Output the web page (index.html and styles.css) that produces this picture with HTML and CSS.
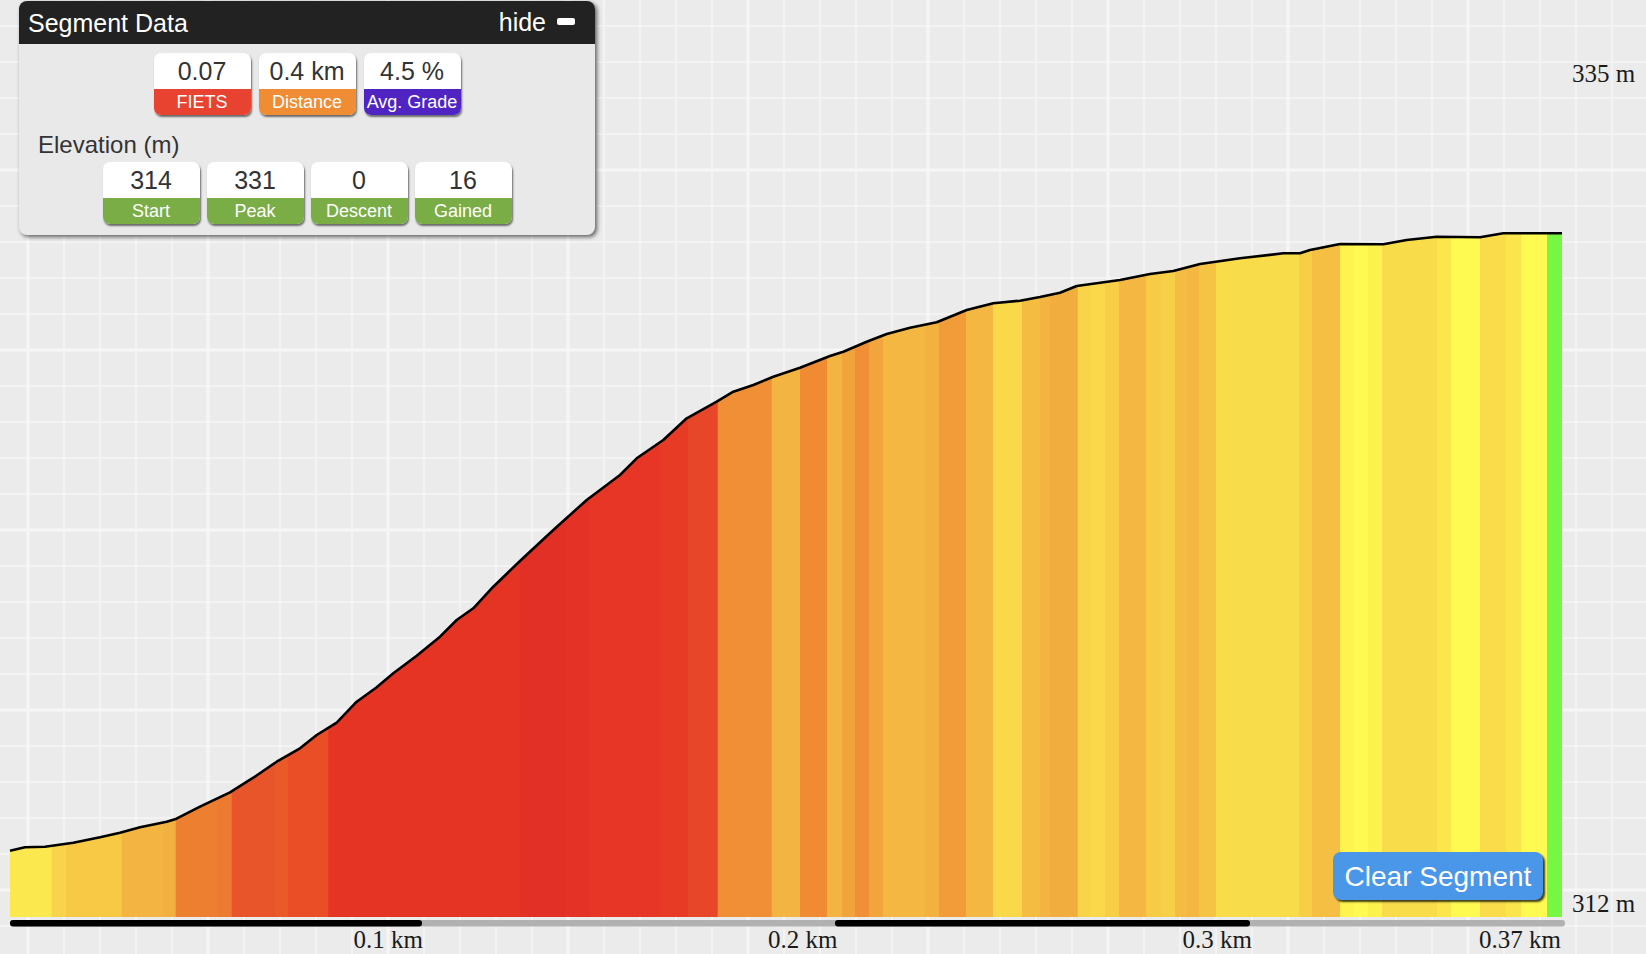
FILE: index.html
```html
<!DOCTYPE html>
<html lang="en">
<head>
<meta charset="utf-8">
<title>Segment Data</title>
<link rel="stylesheet" href="styles.css">
</head>
<body>
<div class="stage">
  <svg class="chart" width="1646" height="954" viewBox="0 0 1646 954" xmlns="http://www.w3.org/2000/svg">
    <defs>
      <clipPath id="area">
        <path d="M10,917 L10,850.7 L25,847.3 L45,846.7 L73.3,842.7 L100,837.3 L120,832.7 L140,827.3 L166.7,821.7 L175,819.3 L200,806.7 L230,792.3 L253.3,777.7 L276.7,761.7 L300,748.3 L316.7,735 L336.7,722.7 L356.7,701.7 L376.7,687.3 L393.3,673.3 L416.7,655.7 L440,636.7 L456.7,620 L473.3,608.3 L493.3,586.7 L520,561 L553.3,530 L586.7,500 L620,475 L636.7,458.3 L663.3,440 L686.7,418.3 L716.7,401.7 L733.3,391.7 L753.3,385 L773.3,376.7 L800,367.7 L830,356 L843.3,351.7 L866.7,341.7 L886.7,334 L910,327.7 L936.7,322.3 L966.7,310 L993.3,303.3 L1020,300.7 L1040,297 L1060,292.7 L1076.7,286 L1120,280 L1150,274 L1173.3,271 L1200,264 L1240,258.3 L1283.3,253.3 L1300,253.3 L1310,250 L1340,244 L1383.3,244.3 L1406.7,240 L1436.7,236.7 L1480,237.3 L1503.3,233.3 L1562,233.3 L1562,917 Z"/>
      </clipPath>
    </defs>
    <g clip-path="url(#area)">
      <rect x="10" y="200" width="42.7" height="720" fill="#fbe84e"/>
      <rect x="51.7" y="200" width="15.3" height="720" fill="#f9d44a"/>
      <rect x="66" y="200" width="56.7" height="720" fill="#f7c944"/>
      <rect x="121.7" y="200" width="42.6" height="720" fill="#f3b441"/>
      <rect x="163.3" y="200" width="13.4" height="720" fill="#f2b040"/>
      <rect x="175.7" y="200" width="42.6" height="720" fill="#ec7f30"/>
      <rect x="217.3" y="200" width="15.4" height="720" fill="#ed7a31"/>
      <rect x="231.7" y="200" width="44.3" height="720" fill="#e8552a"/>
      <rect x="275" y="200" width="14" height="720" fill="#e95a28"/>
      <rect x="288" y="200" width="41.3" height="720" fill="#e94e26"/>
      <rect x="328.3" y="200" width="192.7" height="720" fill="#e63424"/>
      <rect x="520" y="200" width="46" height="720" fill="#e33026"/>
      <rect x="565" y="200" width="26" height="720" fill="#e43326"/>
      <rect x="590" y="200" width="71" height="720" fill="#e73626"/>
      <rect x="660" y="200" width="29" height="720" fill="#e83b26"/>
      <rect x="688" y="200" width="30.7" height="720" fill="#e84629"/>
      <rect x="717.7" y="200" width="55" height="720" fill="#f08f35"/>
      <rect x="771.7" y="200" width="29.3" height="720" fill="#f3b442"/>
      <rect x="800" y="200" width="28" height="720" fill="#f08b34"/>
      <rect x="827" y="200" width="16" height="720" fill="#f3b442"/>
      <rect x="842" y="200" width="14" height="720" fill="#f1a33c"/>
      <rect x="855" y="200" width="15" height="720" fill="#f08f35"/>
      <rect x="869" y="200" width="15" height="720" fill="#f1a53c"/>
      <rect x="883" y="200" width="43" height="720" fill="#f4b742"/>
      <rect x="925" y="200" width="15" height="720" fill="#f3b23f"/>
      <rect x="939" y="200" width="28" height="720" fill="#f19c38"/>
      <rect x="966" y="200" width="28" height="720" fill="#f4b742"/>
      <rect x="993" y="200" width="30" height="720" fill="#f9d94a"/>
      <rect x="1022" y="200" width="19" height="720" fill="#f5bc42"/>
      <rect x="1040" y="200" width="11" height="720" fill="#f3b442"/>
      <rect x="1050" y="200" width="28.7" height="720" fill="#f2ad3f"/>
      <rect x="1077.7" y="200" width="13.3" height="720" fill="#f9d44a"/>
      <rect x="1090" y="200" width="16" height="720" fill="#fad84a"/>
      <rect x="1105" y="200" width="15" height="720" fill="#f8ce46"/>
      <rect x="1119" y="200" width="28" height="720" fill="#f4b842"/>
      <rect x="1146" y="200" width="16" height="720" fill="#f8cb46"/>
      <rect x="1161" y="200" width="15" height="720" fill="#f8d048"/>
      <rect x="1175" y="200" width="13" height="720" fill="#f4bc42"/>
      <rect x="1187" y="200" width="13" height="720" fill="#f3b742"/>
      <rect x="1199" y="200" width="18" height="720" fill="#f6c444"/>
      <rect x="1216" y="200" width="84" height="720" fill="#f9dc4a"/>
      <rect x="1299" y="200" width="14" height="720" fill="#f7cf47"/>
      <rect x="1312" y="200" width="29" height="720" fill="#f4bf43"/>
      <rect x="1340" y="200" width="15" height="720" fill="#fef34f"/>
      <rect x="1354" y="200" width="15" height="720" fill="#fefa51"/>
      <rect x="1368" y="200" width="15" height="720" fill="#fdf14e"/>
      <rect x="1382" y="200" width="56" height="720" fill="#f9dc4a"/>
      <rect x="1437" y="200" width="15" height="720" fill="#fbe74c"/>
      <rect x="1451" y="200" width="30" height="720" fill="#fefa51"/>
      <rect x="1480" y="200" width="27" height="720" fill="#fadc4b"/>
      <rect x="1506" y="200" width="16" height="720" fill="#fbe54d"/>
      <rect x="1521" y="200" width="27" height="720" fill="#fefa51"/>
      <rect x="1547" y="200" width="15" height="720" fill="#76f744"/>
    </g>
    <path class="profile" d="M10,850.7 L25,847.3 L45,846.7 L73.3,842.7 L100,837.3 L120,832.7 L140,827.3 L166.7,821.7 L175,819.3 L200,806.7 L230,792.3 L253.3,777.7 L276.7,761.7 L300,748.3 L316.7,735 L336.7,722.7 L356.7,701.7 L376.7,687.3 L393.3,673.3 L416.7,655.7 L440,636.7 L456.7,620 L473.3,608.3 L493.3,586.7 L520,561 L553.3,530 L586.7,500 L620,475 L636.7,458.3 L663.3,440 L686.7,418.3 L716.7,401.7 L733.3,391.7 L753.3,385 L773.3,376.7 L800,367.7 L830,356 L843.3,351.7 L866.7,341.7 L886.7,334 L910,327.7 L936.7,322.3 L966.7,310 L993.3,303.3 L1020,300.7 L1040,297 L1060,292.7 L1076.7,286 L1120,280 L1150,274 L1173.3,271 L1200,264 L1240,258.3 L1283.3,253.3 L1300,253.3 L1310,250 L1340,244 L1383.3,244.3 L1406.7,240 L1436.7,236.7 L1480,237.3 L1503.3,233.3 L1562,233.3"/>
    <rect x="10" y="920" width="1555" height="6.5" rx="3" fill="#b1b1b1"/>
    <rect x="10" y="920" width="412" height="6.5" rx="3" fill="#000"/>
    <rect x="835" y="920" width="415" height="6.5" rx="3" fill="#000"/>
    <text class="axis" x="423" y="948" text-anchor="end">0.1 km</text>
    <text class="axis" x="837.5" y="948" text-anchor="end">0.2 km</text>
    <text class="axis" x="1252" y="948" text-anchor="end">0.3 km</text>
    <text class="axis" x="1561" y="948" text-anchor="end">0.37 km</text>
    <text class="axis" x="1572" y="81.7">335 m</text>
    <text class="axis" x="1572" y="911.7">312 m</text>
  </svg>

  <div class="panel">
    <div class="panel-head">
      <span class="title">Segment Data</span>
      <span class="hide">hide <span class="minus"></span></span>
    </div>
    <div class="panel-body">
      <div class="stats stats-top">
        <div class="stat"><div class="val">0.07</div><div class="lbl lbl-red">FIETS</div></div>
        <div class="stat"><div class="val">0.4 km</div><div class="lbl lbl-orange">Distance</div></div>
        <div class="stat"><div class="val">4.5 %</div><div class="lbl lbl-purple">Avg. Grade</div></div>
      </div>
      <div class="sub">Elevation (m)</div>
      <div class="stats stats-bottom">
        <div class="stat"><div class="val">314</div><div class="lbl lbl-green">Start</div></div>
        <div class="stat"><div class="val">331</div><div class="lbl lbl-green">Peak</div></div>
        <div class="stat"><div class="val">0</div><div class="lbl lbl-green">Descent</div></div>
        <div class="stat"><div class="val">16</div><div class="lbl lbl-green">Gained</div></div>
      </div>
    </div>
  </div>

  <button class="clear" type="button">Clear Segment</button>
</div>
</body>
</html>
```

FILE: styles.css
```css
html, body {
  margin: 0;
  padding: 0;
}

body {
  width: 1646px;
  height: 954px;
  overflow: hidden;
  background: #ebebeb;
  font-family: "Liberation Sans", Arial, sans-serif;
}

.stage {
  position: relative;
  width: 1646px;
  height: 954px;
  background-color: #ebebeb;
  background-image:
    linear-gradient(to right, #f6f6f6 0, #f6f6f6 3px, transparent 3px),
    linear-gradient(to bottom, #f6f6f6 0, #f6f6f6 3px, transparent 3px),
    linear-gradient(to right, #f3f3f3 0, #f3f3f3 2px, transparent 2px),
    linear-gradient(to bottom, #f3f3f3 0, #f3f3f3 2px, transparent 2px);
  background-size: 180px 100%, 100% 180px, 36px 100%, 100% 36px;
  background-position: 26.5px 0, 0 168.5px, 27px 0, 0 25px;
}

.chart {
  display: block;
}

.profile {
  fill: none;
  stroke: #000;
  stroke-width: 2.6;
  stroke-linejoin: round;
}

.axis {
  font-family: "Liberation Serif", "Times New Roman", serif;
  font-size: 25px;
  fill: #1a1a1a;
}

.panel {
  position: absolute;
  left: 19px;
  top: 1px;
  width: 576px;
  height: 234px;
  background: #e9e9e9;
  border-radius: 8px;
  box-shadow: 2px 2px 4px rgba(0, 0, 0, 0.6);
  overflow: hidden;
}

.panel-head {
  height: 43px;
  background: #222;
  color: #fff;
  display: flex;
  align-items: center;
  justify-content: space-between;
  padding: 0 20px 0 9px;
  font-size: 25px;
  line-height: 43px;
}

.title {
  padding-top: 1px;
}

.hide {
  display: flex;
  align-items: center;
  gap: 11px;
}

.minus {
  display: block;
  width: 18px;
  height: 7px;
  background: #fff;
  border-radius: 2px;
  margin-top: -2px;
}

.panel-body {
  padding-top: 9px;
}

.stats {
  display: flex;
  justify-content: center;
}

.stats-top {
  gap: 8px;
}

.stats-bottom {
  gap: 7px;
}

.stat {
  width: 97px;
  background: #fff;
  border-radius: 7px;
  overflow: hidden;
  box-shadow: 1px 2px 2px rgba(0, 0, 0, 0.55);
}

.val {
  height: 36px;
  line-height: 36px;
  text-align: center;
  font-size: 25px;
  color: #333;
}

.lbl {
  height: 26px;
  line-height: 26px;
  text-align: center;
  font-size: 18px;
  color: #fff;
}

.lbl-red { background: #e84230; }
.lbl-orange { background: #ef8c34; }
.lbl-purple { background: #5024c3; }
.lbl-green { background: #7aad45; }

.sub {
  margin: 15px 0 2px 19px;
  font-size: 24px;
  line-height: 30px;
  color: #333;
}

.clear {
  position: absolute;
  left: 1333px;
  top: 852px;
  width: 210px;
  height: 48px;
  padding: 2px 0 0;
  border: none;
  border-radius: 8px;
  background: #4a96e8;
  color: #fff;
  font-family: "Liberation Sans", Arial, sans-serif;
  font-size: 28px;
  line-height: 46px;
  box-shadow: 2px 2px 2px rgba(0, 0, 0, 0.75);
}
```
